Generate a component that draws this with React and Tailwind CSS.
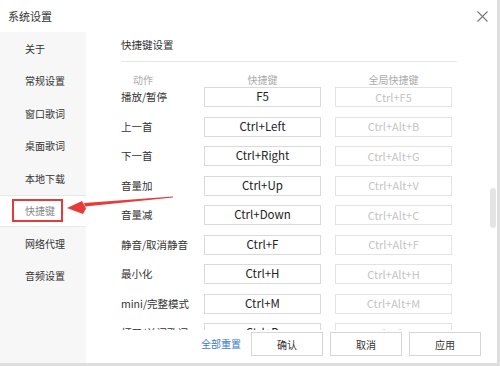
import React from "react";

const MENU = ["关于", "常规设置", "窗口歌词", "桌面歌词", "本地下载", "快捷键", "网络代理", "音频设置"];

const ROWS = [
    ["播放/暂停", "F5", "Ctrl+F5"],
    ["上一首", "Ctrl+Left", "Ctrl+Alt+B"],
    ["下一首", "Ctrl+Right", "Ctrl+Alt+G"],
    ["音量加", "Ctrl+Up", "Ctrl+Alt+V"],
    ["音量减", "Ctrl+Down", "Ctrl+Alt+C"],
    ["静音/取消静音", "Ctrl+F", "Ctrl+Alt+F"],
    ["最小化", "Ctrl+H", "Ctrl+Alt+H"],
    ["mini/完整模式", "Ctrl+M", "Ctrl+Alt+M"],
    ["打开/关闭歌词", "Ctrl+D", "Ctrl+Alt+D"],
];

const font = { fontFamily: '"Noto Sans CJK SC", "Noto Sans", sans-serif' };

export default function App() {
    return (
        <div className="w-[500px] h-[366px] bg-[#dedede] overflow-hidden" style={font}>
            <div className="relative w-[497px] h-[363px] bg-white flex flex-col">
                {/* Title bar */}
                <div className="h-[32px] flex items-center justify-between pl-[8px] pr-[9px] shrink-0">
                    <span className="text-[11px] text-[#333]">系统设置</span>
                    <svg width="11" height="11" viewBox="0 0 11 11" className="mt-[1px]">
                        <path d="M0.5 0.5 L10.5 10.5 M10.5 0.5 L0.5 10.5" stroke="#777" strokeWidth="1.1" fill="none" />
                    </svg>
                </div>

                <div className="flex flex-1 min-h-0">
                    {/* Sidebar */}
                    <div className="w-[86px] bg-[#f7f7f7] shrink-0">
                        {MENU.map((m) => {
                            const active = m === "快捷键";
                            return (
                                <div
                                    key={m}
                                    className={
                                        active
                                            ? "h-[32.5px] flex items-center pl-[25px] text-[10px] text-[#888] bg-white border-y border-[#e8e8e8]"
                                            : "h-[32.5px] flex items-center pl-[25px] text-[10px] text-[#333]"
                                    }
                                >
                                    {m}
                                </div>
                            );
                        })}
                    </div>

                    {/* Content */}
                    <div className="relative flex-1 flex flex-col">
                        <div className="pl-[35px] pr-[40px]">
                            <div className="pt-[5px] leading-[16px] text-[10.5px] text-[#333]">快捷键设置</div>
                            <div className="mt-[8px] h-px bg-[#e6e6e6]" />
                            <div className="h-[25px] pt-[12px] flex text-[10px] leading-[12px] text-[#aaa]">
                                <div className="w-[83px] pl-[12px]">动作</div>
                                <div className="w-[117px] text-center">快捷键</div>
                                <div className="w-[117px] ml-[14px] text-center">全局快捷键</div>
                            </div>
                        </div>
                        <div className="h-[243px] overflow-hidden pl-[35px]">
                            {ROWS.map(([label, key, global]) => (
                                <div key={label} className="h-[29.5px] flex items-start">
                                    <div className="w-[83px] leading-[20px] text-[10.5px] text-[#333] whitespace-nowrap">{label}</div>
                                    <div className="w-[117px] h-[20px] border border-[#dadada] flex items-center justify-center text-[11.5px] text-[#222]">
                                        {key}
                                    </div>
                                    <div className="w-[117px] h-[20px] ml-[14px] border border-[#e3e3e3] flex items-center justify-center text-[11px] text-[#c4c4c4]">
                                        {global}
                                    </div>
                                </div>
                            ))}
                        </div>
                        {/* Footer */}
                        <div className="flex items-start pt-[2px] pl-[115px] text-[10px]">
                            <span className="leading-[24px] text-[#3d7bc8]">全部重置</span>
                            <button className="ml-[10px] w-[72px] h-[24px] border border-[#d6d6d6] bg-white text-[#333]">确认</button>
                            <button className="ml-[7px] w-[72px] h-[24px] border border-[#d6d6d6] bg-white text-[#333]">取消</button>
                            <button className="ml-[7px] w-[72px] h-[24px] border border-[#d6d6d6] bg-white text-[#333]">应用</button>
                        </div>

                        {/* Scrollbar thumb */}
                        <div className="absolute right-[1px] top-[156px] w-[6px] h-[40px] rounded-full bg-[#e4e4e4]" />
                    </div>
                </div>

                {/* Annotation: red box + arrow */}
                <div className="absolute left-[12px] top-[199px] w-[51px] h-[23px] border-2 border-[#e33b3b]" />
                <svg className="absolute left-0 top-0 pointer-events-none" width="497" height="363">
                    <polygon points="173,196.5 84,203 85,206.5 173,197.5" fill="#e83a3a" />
                    <polygon points="67,208 82,201 86,208.5 83,214" fill="#e83a3a" />
                </svg>
            </div>
        </div>
    );
}
